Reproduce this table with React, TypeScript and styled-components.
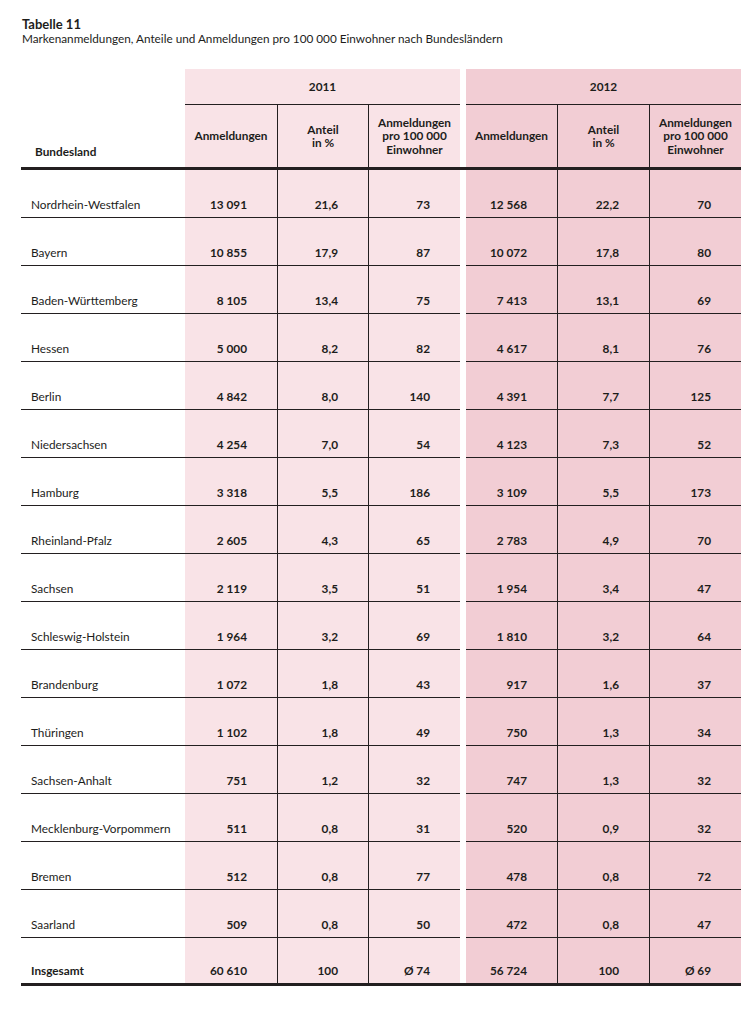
import React from "react";
import styled, { createGlobalStyle } from "styled-components";

const GlobalStyle = createGlobalStyle`
  html, body { margin: 0; padding: 0; background: #ffffff; }
  body { font-family: Lato, "Liberation Sans", sans-serif; color: #1d1d1b; }
`;

const LINE = "#231f20";
const PINK: Record<string, string> = { a: "#f9e3e7", b: "#f2cdd4" };

const Page = styled.div`
  width: 754px;
  padding: 17px 0 0 0;
  box-sizing: border-box;
`;

const Titles = styled.div`
  padding-left: 22px;
  margin-bottom: 23px;
`;

const Title = styled.div`
  font-size: 13px;
  font-weight: 700;
  line-height: 15px;
`;

const Subtitle = styled.div`
  font-size: 11.75px;
  line-height: 14px;
`;

const Grid = styled.div`
  margin-left: 21px;
  width: 720px;
  display: grid;
  grid-template-columns: 164px 92px 91px 92px 6px 91px 92px 92px;
  font-size: 11.8px;
  line-height: 14px;
`;

const YearCell = styled.div<{ $tone: string }>`
  grid-column: span 3;
  height: 36px;
  box-sizing: border-box;
  background: ${(p) => PINK[p.$tone]};
  border-bottom: 1px solid ${LINE};
  display: flex;
  align-items: center;
  justify-content: center;
  font-weight: 700;
`;

const Blank = styled.div``;

const Gap = styled.div``;

const LabelHead = styled.div`
  height: 62px;
  box-sizing: border-box;
  display: flex;
  align-items: flex-end;
  padding: 0 0 8px 14px;
  font-weight: 700;
`;

const HeadCell = styled.div<{ $tone: string; $divider?: boolean }>`
  height: 62px;
  box-sizing: border-box;
  background: ${(p) => PINK[p.$tone]};
  border-left: ${(p) => (p.$divider ? `1px solid ${LINE}` : "none")};
  display: flex;
  align-items: center;
  justify-content: center;
  text-align: center;
  font-weight: 700;
  line-height: 13.5px;
  white-space: pre-line;
`;

const Rule = styled.div`
  grid-column: 1 / -1;
  height: 3px;
  background: ${LINE};
`;

const Label = styled.div<{ $total?: boolean }>`
  height: ${(p) => (p.$total ? "45px" : "48px")};
  box-sizing: border-box;
  border-bottom: ${(p) => (p.$total ? "none" : `1px solid ${LINE}`)};
  display: flex;
  align-items: flex-end;
  padding: 0 0 5px 10px;
  font-weight: ${(p) => (p.$total ? 700 : 400)};
`;

const NumCell = styled.div<{ $tone: string; $divider?: boolean; $total?: boolean }>`
  height: ${(p) => (p.$total ? "45px" : "48px")};
  box-sizing: border-box;
  background: ${(p) => PINK[p.$tone]};
  border-bottom: ${(p) => (p.$total ? "none" : `1px solid ${LINE}`)};
  border-left: ${(p) => (p.$divider ? `1px solid ${LINE}` : "none")};
  display: flex;
  align-items: flex-end;
  justify-content: flex-end;
  padding: 0 30px 5px 0;
  font-weight: 700;
  white-space: nowrap;
`;

const S = "\u00A0";

const rows: string[][] = [
  ["Nordrhein-Westfalen", `13${S}091`, "21,6", "73", `12${S}568`, "22,2", "70"],
  ["Bayern", `10${S}855`, "17,9", "87", `10${S}072`, "17,8", "80"],
  ["Baden-Württemberg", `8${S}105`, "13,4", "75", `7${S}413`, "13,1", "69"],
  ["Hessen", `5${S}000`, "8,2", "82", `4${S}617`, "8,1", "76"],
  ["Berlin", `4${S}842`, "8,0", "140", `4${S}391`, "7,7", "125"],
  ["Niedersachsen", `4${S}254`, "7,0", "54", `4${S}123`, "7,3", "52"],
  ["Hamburg", `3${S}318`, "5,5", "186", `3${S}109`, "5,5", "173"],
  ["Rheinland-Pfalz", `2${S}605`, "4,3", "65", `2${S}783`, "4,9", "70"],
  ["Sachsen", `2${S}119`, "3,5", "51", `1${S}954`, "3,4", "47"],
  ["Schleswig-Holstein", `1${S}964`, "3,2", "69", `1${S}810`, "3,2", "64"],
  ["Brandenburg", `1${S}072`, "1,8", "43", "917", "1,6", "37"],
  ["Thüringen", `1${S}102`, "1,8", "49", "750", "1,3", "34"],
  ["Sachsen-Anhalt", "751", "1,2", "32", "747", "1,3", "32"],
  ["Mecklenburg-Vorpommern", "511", "0,8", "31", "520", "0,9", "32"],
  ["Bremen", "512", "0,8", "77", "478", "0,8", "72"],
  ["Saarland", "509", "0,8", "50", "472", "0,8", "47"],
];

const total = ["Insgesamt", `60${S}610`, "100", `Ø${S}74`, `56${S}724`, "100", `Ø${S}69`];

const heads = ["Anmeldungen", "Anteil\nin %", `Anmeldungen\npro 100${S}000\nEinwohner`];

function DataRow({ cells, isTotal }: { cells: string[]; isTotal?: boolean }) {
  return (
    <>
      <Label $total={isTotal}>{cells[0]}</Label>
      {cells.slice(1, 4).map((c, i) => (
        <NumCell key={`a${i}`} $tone="a" $divider={i > 0} $total={isTotal}>
          {c}
        </NumCell>
      ))}
      <Gap />
      {cells.slice(4, 7).map((c, i) => (
        <NumCell key={`b${i}`} $tone="b" $divider={i > 0} $total={isTotal}>
          {c}
        </NumCell>
      ))}
    </>
  );
}

export default function App() {
  return (
    <Page>
      <GlobalStyle />
      <Titles>
        <Title>Tabelle 11</Title>
        <Subtitle>
          Markenanmeldungen, Anteile und Anmeldungen pro 100{S}000 Einwohner nach Bundesländern
        </Subtitle>
      </Titles>
      <Grid>
        <Blank />
        <YearCell $tone="a">2011</YearCell>
        <Gap />
        <YearCell $tone="b">2012</YearCell>

        <LabelHead>Bundesland</LabelHead>
        {heads.map((h, i) => (
          <HeadCell key={`ha${i}`} $tone="a" $divider={i > 0}>
            {h}
          </HeadCell>
        ))}
        <Gap />
        {heads.map((h, i) => (
          <HeadCell key={`hb${i}`} $tone="b" $divider={i > 0}>
            {h}
          </HeadCell>
        ))}

        <Rule />
        {rows.map((r) => (
          <DataRow key={r[0]} cells={r} />
        ))}
        <DataRow cells={total} isTotal />
        <Rule />
      </Grid>
    </Page>
  );
}
